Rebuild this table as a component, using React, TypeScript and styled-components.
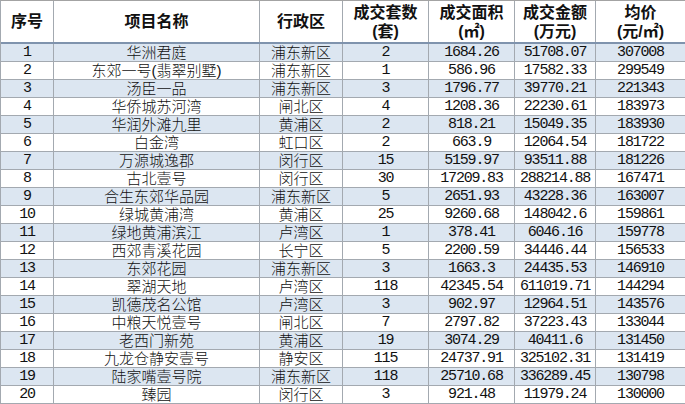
import React from 'react'
import styled, { createGlobalStyle } from 'styled-components'

type Deal = [string, string, string, string, string, string, string]

const deals: Deal[] = [
  ['1', '华洲君庭', '浦东新区', '2', '1684.26', '51708.07', '307008'],
  ['2', '东郊一号(翡翠别墅)', '浦东新区', '1', '586.96', '17582.33', '299549'],
  ['3', '汤臣一品', '浦东新区', '3', '1796.77', '39770.21', '221343'],
  ['4', '华侨城苏河湾', '闸北区', '4', '1208.36', '22230.61', '183973'],
  ['5', '华润外滩九里', '黄浦区', '2', '818.21', '15049.35', '183930'],
  ['6', '白金湾', '虹口区', '2', '663.9', '12064.54', '181722'],
  ['7', '万源城逸郡', '闵行区', '15', '5159.97', '93511.88', '181226'],
  ['8', '古北壹号', '闵行区', '30', '17209.83', '288214.88', '167471'],
  ['9', '合生东郊华品园', '浦东新区', '5', '2651.93', '43228.36', '163007'],
  ['10', '绿城黄浦湾', '黄浦区', '25', '9260.68', '148042.6', '159861'],
  ['11', '绿地黄浦滨江', '卢湾区', '1', '378.41', '6046.16', '159778'],
  ['12', '西郊青溪花园', '长宁区', '5', '2200.59', '34446.44', '156533'],
  ['13', '东郊花园', '浦东新区', '3', '1663.3', '24435.53', '146910'],
  ['14', '翠湖天地', '卢湾区', '118', '42345.54', '611019.71', '144294'],
  ['15', '凯德茂名公馆', '卢湾区', '3', '902.97', '12964.51', '143576'],
  ['16', '中粮天悦壹号', '闸北区', '7', '2797.82', '37223.43', '133044'],
  ['17', '老西门新苑', '黄浦区', '19', '3074.29', '40411.6', '131450'],
  ['18', '九龙仓静安壹号', '静安区', '115', '24737.91', '325102.31', '131419'],
  ['19', '陆家嘴壹号院', '浦东新区', '118', '25710.68', '336289.45', '130798'],
  ['20', '臻园', '闵行区', '3', '921.48', '11979.24', '130000'],
]

const headings: string[][] = [
  ['序号'],
  ['项目名称'],
  ['行政区'],
  ['成交套数', '(套)'],
  ['成交面积', '(㎡)'],
  ['成交金额', '(万元)'],
  ['均价', '(元/㎡)'],
]

// columns holding numbers get the narrow half-width digits
const numeric = [true, false, false, true, true, true, true]

const App = () => {
  return (
    <Sheet>
      <GlobalStyle />
      <HeadRow>
        {headings.map((lines, i) => (
          <HeadCell key={i}>
            {lines.map((l) => (
              <span key={l}>{l}</span>
            ))}
          </HeadCell>
        ))}
      </HeadRow>
      {deals.map((d, r) => (
        <Row key={d[0]} $striped={r % 2 === 0}>
          {d.map((v, i) => (
            <Cell key={i} $num={numeric[i]}>
              {v}
            </Cell>
          ))}
        </Row>
      ))}
    </Sheet>
  )
}

const GlobalStyle = createGlobalStyle`
  *, *::before, *::after {
    margin: 0;
    padding: 0;
    box-sizing: border-box;
  }
  body {
    background: #ffffff;
    font-family: "Liberation Sans", "Noto Sans CJK SC", sans-serif;
    color: #000000;
  }
`

const columns = '53px 206px 83px 86px 86px 81px 90px'

const Sheet = styled.div`
  width: 685px;
  border-top: 1px solid #a3a3a3;
  border-left: 1px solid #a3a9b0;
`

const HeadRow = styled.div`
  display: grid;
  grid-template-columns: ${columns};
  height: 43px;
  border-bottom: 2px solid #7f93ad;
`

const HeadCell = styled.div`
  display: flex;
  flex-direction: column;
  align-items: center;
  justify-content: center;
  border-right: 1px solid #a3a9b0;
  font-family: "Liberation Sans", "Noto Sans CJK SC", sans-serif;
  font-weight: 700;
  font-size: 16px;
  line-height: 19px;
  color: #111111;
`

const Row = styled.div<{ $striped: boolean }>`
  display: grid;
  grid-template-columns: ${columns};
  height: 18px;
  border-bottom: 1px solid #a3a9b0;
  background: ${(p) => (p.$striped ? '#dce6f1' : '#ffffff')};
`

const Cell = styled.div<{ $num: boolean }>`
  display: flex;
  align-items: center;
  justify-content: center;
  border-right: 1px solid #a3a9b0;
  white-space: nowrap;
  font-family: ${(p) =>
    p.$num
      ? '"Liberation Mono", monospace'
      : '"Liberation Sans", "Noto Sans CJK SC", sans-serif'};
  font-size: 15px;
  font-weight: ${(p) => (p.$num ? 400 : 300)};
  letter-spacing: ${(p) => (p.$num ? '-1.2px' : '0')};
  line-height: 17px;
  color: #111111;
`

export default App
